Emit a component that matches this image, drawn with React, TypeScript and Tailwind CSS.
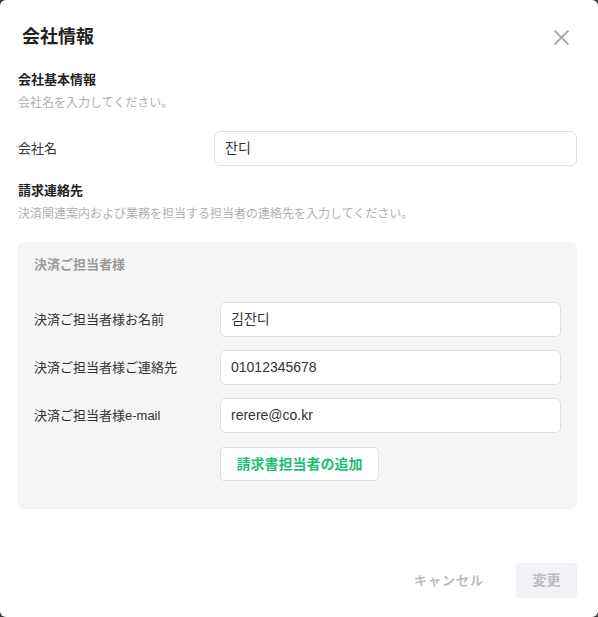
const font = { fontFamily: '"Liberation Sans", "Noto Sans CJK JP", "Noto Sans CJK KR", sans-serif' };

function Field({ label, value, labelWidth }: { label: string; value: string; labelWidth: string }) {
  return (
    <div className="flex items-center">
      <div className={`${labelWidth} shrink-0 text-[13px] leading-[20px] text-[#333]`}>{label}</div>
      <div className="flex-1 h-[35px] flex items-center px-[10px] bg-white border border-[#e0e0e0] rounded-[6px] text-[14px] text-[#333]">
        {value}
      </div>
    </div>
  );
}

export default function App() {
  return (
    <div className="min-h-[617px] bg-[#3a3a3a]" style={font}>
      <div className="h-[617px] bg-white rounded-[6px] flex flex-col">
        <div className="flex items-center justify-between pl-[22px] pr-[28px] pt-[24px]">
          <h1 className="text-[18px] leading-[26px] font-bold text-[#222]">会社情報</h1>
          <svg width="17" height="17" viewBox="0 0 16 16" fill="none" stroke="#a8a8a8" strokeWidth="1.8">
            <path d="M1.5 1.5l13 13M14.5 1.5l-13 13" />
          </svg>
        </div>

        <div className="pl-[18px] pr-[21px]">
          <div className="mt-[20px] text-[13px] leading-[20px] font-bold text-[#222]">会社基本情報</div>
          <div className="mt-[4px] text-[12px] leading-[18px] text-[#b0b0b0]">会社名を入力してください。</div>
          <div className="mt-[19px]">
            <Field label="会社名" value="잔디" labelWidth="w-[196px]" />
          </div>

          <div className="mt-[15px] text-[13px] leading-[20px] font-bold text-[#222]">請求連絡先</div>
          <div className="mt-[4px] text-[12px] leading-[18px] text-[#b0b0b0]">
            決済関連案内および業務を担当する担当者の連絡先を入力してください。
          </div>

          <div className="mt-[19px] bg-[#f5f5f5] rounded-[6px] px-[16px] pt-[13px] pb-[28px]">
            <div className="text-[13px] leading-[20px] font-bold text-[#9a9a9a]">決済ご担当者様</div>
            <div className="mt-[27px] flex flex-col gap-[13px]">
              <Field label="決済ご担当者様お名前" value="김잔디" labelWidth="w-[186px]" />
              <Field label="決済ご担当者様ご連絡先" value="01012345678" labelWidth="w-[186px]" />
              <Field label="決済ご担当者様e-mail" value="rerere@co.kr" labelWidth="w-[186px]" />
            </div>
            <div className="mt-[14px] pl-[186px]">
              <button className="h-[34px] w-[159px] bg-white border border-[#dedede] rounded-[4px] text-[14px] font-bold text-[#1ebe75]">
                請求書担当者の追加
              </button>
            </div>
          </div>
        </div>

        <div className="mt-[54px] flex items-center justify-end gap-[32px] pr-[21px]">
          <button className="text-[13px] font-bold text-[#bdbdbd] tracking-[1px]">キャンセル</button>
          <button className="h-[35px] w-[61px] rounded-[4px] bg-[#f1f2f5] text-[14px] font-bold text-[#bdbdbd]">変更</button>
        </div>
      </div>
    </div>
  );
}
